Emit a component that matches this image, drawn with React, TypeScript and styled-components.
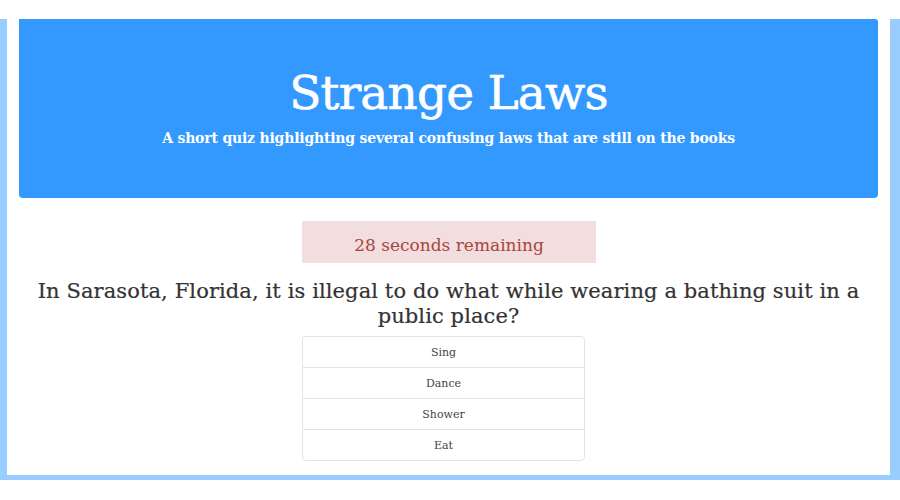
import React from "react";
import styled, { createGlobalStyle } from "styled-components";

const Global = createGlobalStyle`
  html, body { margin: 0; padding: 0; background: #fff; }
  body { font-family: "DejaVu Serif", "Liberation Serif", serif; color: #333; }
`;

const Frame = styled.div`
  margin-top: 19px;
  width: 900px;
  box-sizing: border-box;
  border-left: 7px solid #99ccff;
  border-right: 10px solid #99ccff;
  border-bottom: 5px solid #99ccff;
  background: #fff;
  padding: 0 12px 15px;
  height: 461px;
`;

const Header = styled.header`
  background: #3399ff;
  border-radius: 0 3px 4px 4px;
  height: 179px;
  display: flex;
  flex-direction: column;
  align-items: center;
  color: #fff;
  box-sizing: border-box;
  padding-top: 42px;
`;

const Title = styled.h1`
  margin: 0;
  font-size: 47px;
  font-weight: normal;
  line-height: 64px;
  letter-spacing: -0.8px;
  -webkit-text-stroke: 0.6px #fff;
`;

const Subtitle = styled.p`
  margin: 3px 0 0;
  font-size: 14px;
  line-height: 20px;
  font-weight: bold;
  letter-spacing: -0.2px;
`;

const Timer = styled.div`
  margin: 23px 0 0 283px;
  width: 294px;
  height: 42px;
  box-sizing: border-box;
  padding-top: 12px;
  background: #f2dede;
  color: #a94442;
  font-size: 17px;
  line-height: 24px;
  text-align: center;
`;

const Question = styled.h2`
  margin: 16px 0 7px;
  font-size: 21px;
  font-weight: normal;
  line-height: 25px;
  text-align: center;
  color: #333;
  letter-spacing: 0.1px;
  -webkit-text-stroke: 0.2px #333;
`;

const List = styled.ul`
  margin: 0 0 0 283px;
  padding: 0;
  list-style: none;
  width: 283px;
  border: 1px solid #e3e3e3;
  border-radius: 4px;
  box-sizing: border-box;
`;

const Item = styled.li`
  height: 31px;
  box-sizing: border-box;
  border-top: 1px solid #e3e3e3;
  &:first-child { border-top: none; height: 30px; }
  display: flex;
  align-items: center;
  justify-content: center;
  font-size: 11px;
  color: #444;
`;

const answers = ["Sing", "Dance", "Shower", "Eat"];

export default function App() {
  return (
    <>
      <Global />
      <Frame>
        <Header>
          <Title>Strange Laws</Title>
          <Subtitle>A short quiz highlighting several confusing laws that are still on the books</Subtitle>
        </Header>
        <Timer>28 seconds remaining</Timer>
        <Question>
          In Sarasota, Florida, it is illegal to do what while wearing a bathing suit in a
          <br />
          public place?
        </Question>
        <List>
          {answers.map((a) => (
            <Item key={a}>{a}</Item>
          ))}
        </List>
      </Frame>
    </>
  );
}
